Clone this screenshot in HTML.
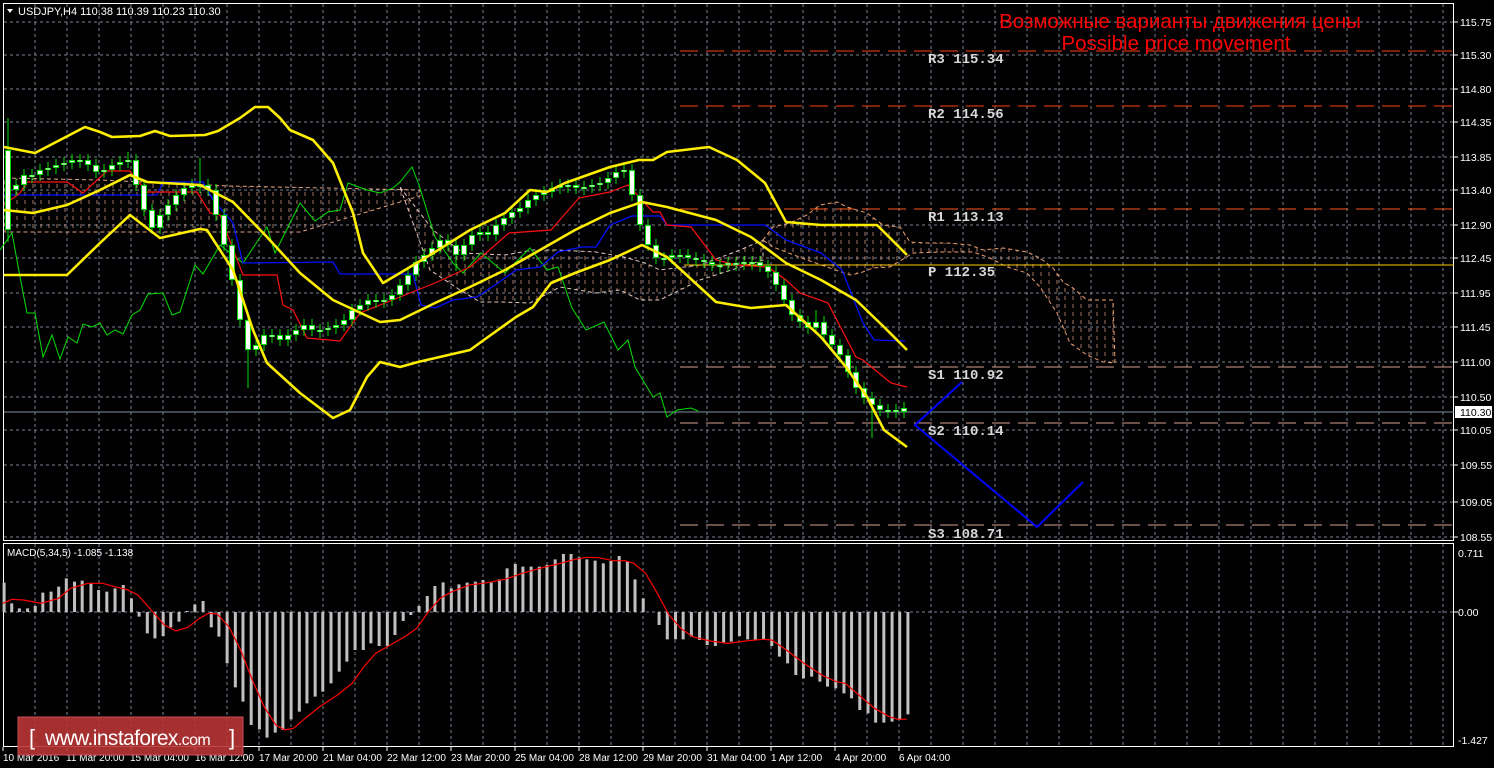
<!DOCTYPE html>
<html><head><meta charset="utf-8"><style>
html,body{margin:0;padding:0;background:#000;}
svg{display:block;font-family:"Liberation Sans",sans-serif;}
</style></head><body>
<svg width="1494" height="768" viewBox="0 0 1494 768" xmlns="http://www.w3.org/2000/svg">
<defs>
<pattern id="hatch" width="8" height="8" patternUnits="userSpaceOnUse">
<line x1="1" y1="0" x2="1" y2="4" stroke="#d8a088" stroke-width="1" stroke-opacity="0.75"/>
</pattern>
</defs>
<rect width="1494" height="768" fill="#000"/>
<!-- grid -->
<g stroke="#7a8595" stroke-width="1" stroke-dasharray="3,3" fill="none">
<path d="M35 4V541M67 4V541M99 4V541M131 4V541M163 4V541M195 4V541M227 4V541M259 4V541M291 4V541M323 4V541M355 4V541M387 4V541M419 4V541M451 4V541M483 4V541M515 4V541M547 4V541M579 4V541M611 4V541M643 4V541M675 4V541M707 4V541M739 4V541M771 4V541M803 4V541M835 4V541M867 4V541M899 4V541M931 4V541M963 4V541M995 4V541M1027 4V541M1059 4V541M1091 4V541M1123 4V541M1155 4V541M1187 4V541M1219 4V541M1251 4V541M1283 4V541M1315 4V541M1347 4V541M1379 4V541M1411 4V541M1443 4V541"/>
<path d="M35 544V746M67 544V746M99 544V746M131 544V746M163 544V746M195 544V746M227 544V746M259 544V746M291 544V746M323 544V746M355 544V746M387 544V746M419 544V746M451 544V746M483 544V746M515 544V746M547 544V746M579 544V746M611 544V746M643 544V746M675 544V746M707 544V746M739 544V746M771 544V746M803 544V746M835 544V746M867 544V746M899 544V746M931 544V746M963 544V746M995 544V746M1027 544V746M1059 544V746M1091 544V746M1123 544V746M1155 544V746M1187 544V746M1219 544V746M1251 544V746M1283 544V746M1315 544V746M1347 544V746M1379 544V746M1411 544V746M1443 544V746"/>
<path d="M4 22H1454M4 55H1454M4 89H1454M4 122H1454M4 157H1454M4 190H1454M4 225H1454M4 258H1454M4 293H1454M4 327H1454M4 362H1454M4 397H1454M4 430H1454M4 465H1454M4 502H1454M4 537H1454M4 612H1454"/>
</g>
<!-- frames -->
<g stroke="#fff" stroke-width="1" fill="none">
<rect x="3.5" y="3.5" width="1450" height="537"/>
<rect x="3.5" y="543.5" width="1450" height="203"/>
</g>
<!-- clouds -->
<g stroke-dasharray="4,3" stroke-width="1">
<polygon points="5,178 100,180 230,186 420,190 420,196 300,232 5,232" fill="url(#hatch)" stroke="#e0a080"/>
<polygon points="400,187 433,230 463,253 505,255 533,250 557,250 596,252 624,257 645,263 660,270 700,265 740,250 763,240 763,260 700,280 660,300 640,300 620,290 596,293 560,287 530,303 500,302 480,302 460,290 430,270" fill="url(#hatch)" stroke="#e8c8c0"/>
<polygon points="763,240 773,227 790,223 807,215 820,205 837,202 847,207 867,213 883,225 900,227 910,242 927,243 947,243 970,245 983,250 1003,248 1027,252 1040,258 1053,268 1063,282 1073,288 1087,300 1113,300 1115,363 1103,362 1087,355 1070,343 1057,313 1040,287 1027,273 1007,267 990,258 973,252 940,252 913,253 890,267 873,268 860,273 850,275 807,260 773,247" fill="url(#hatch)" stroke="#f0a070"/>
</g>
<!-- pivot lines -->
<g fill="none" stroke-width="1">
<path d="M680 51H1454M680 106H1454" stroke="#ff4010" stroke-dasharray="18,8"/>
<path d="M680 209H1454" stroke="#ff5520" stroke-dasharray="18,8"/>
<path d="M684 265H1454" stroke="#ffcc00"/>
<path d="M680 367H1454M680 423H1454M680 525H1454" stroke="#d8a090" stroke-dasharray="18,8"/>
<path d="M4 412H1454" stroke="#8090a0"/>
</g>
<g font-family="Liberation Mono,monospace" font-weight="bold" font-size="14" fill="#d8d8d8">
<text x="928" y="63">R3 115.34</text>
<text x="928" y="118">R2 114.56</text>
<text x="928" y="221">R1 113.13</text>
<text x="928" y="276">P  112.35</text>
<text x="928" y="379">S1 110.92</text>
<text x="928" y="435">S2 110.14</text>
<text x="928" y="538">S3 108.71</text>
</g>
<!-- chikou green -->
<polyline fill="none" stroke="#00e000" stroke-width="1" points="0,250 12,233 20,277 27,313 35,313 43,357 52,335 60,359 68,337 77,343 83,324 92,327 100,323 107,335 115,330 123,334 132,315 140,310 148,294 163,293 172,315 180,312 195,265 203,274 220,245 243,263 267,227 275,253 300,203 315,221 328,212 340,210 348,183 367,190 380,193 393,188 400,182 412,167 419,185 435,237 453,263 463,273 481,253 505,273 530,248 547,270 558,267 572,308 586,330 604,322 618,350 628,340 635,367 653,397 660,393 667,417 677,410 691,408 698,411"/>
<!-- kijun blue -->
<polyline fill="none" stroke="#0010ff" stroke-width="1.3" points="4,195 157,195 163,182 203,182 213,200 233,223 243,263 333,262 340,274 413,274 421,305 435,308 453,300 477,297 498,283 516,270 540,267 558,252 582,247 596,247 610,225 632,216 660,216 667,225 765,225 786,240 821,253 842,270 863,323 874,340 905,341"/>
<!-- tenkan red -->
<polyline fill="none" stroke="#ff1010" stroke-width="1.2" points="4,205 20,193 27,182 67,182 83,193 107,171 130,171 147,192 197,192 210,213 220,215 243,275 277,275 283,305 293,310 307,338 340,341 360,313 400,297 435,283 470,267 509,233 551,230 579,198 610,192 628,185 653,212 660,212 667,225 691,227 716,260 737,265 768,267 786,280 800,293 828,303 856,357 863,360 891,383 907,387"/>
<!-- candles -->
<path fill="none" stroke="#00dd00" stroke-width="1" d="M8 118V242M16 179V196M24 169V191M32 169V183M40 164V181M48 162V176M56 159V174M64 157V171M72 154V169M80 154V168M88 154V171M96 159V178M104 164V178M112 159V176M120 156V171M128 152V168M136 154V191M144 179V216M152 204V234M160 209V234M168 199V221M176 189V211M184 182V201M192 179V194M200 158V193M208 179V196M216 184V221M224 209V251M232 239V286M240 274V326M248 314V388M256 339V356M264 329V351M272 329V343M280 329V346M288 329V346M296 324V341M304 319V336M312 319V336M320 324V338M328 322V336M336 319V334M344 314V331M352 304V326M360 299V316M368 294V311M376 294V308M384 294V308M392 289V306M400 279V301M408 269V291M416 256V281M424 249V268M432 242V261M440 234V254M448 234V251M456 239V271M464 239V261M472 229V251M480 226V241M488 226V241M496 219V241M504 212V231M512 206V224M520 202V218M528 194V214M536 189V206M544 186V201M552 182V198M560 179V194M568 179V193M576 179V194M584 181V195M592 179V193M600 177V191M608 172V189M616 166V184M624 162V178M632 164V201M640 189V231M648 219V251M656 239V264M664 252V266M672 249V264M680 249V263M688 249V264M696 252V266M704 254V268M712 256V271M720 259V273M728 257V271M736 257V271M744 256V270M752 256V270M760 256V272M768 260V278M776 266V291M784 279V306M792 294V321M800 309V328M808 316V334M816 310V334M824 316V341M832 329V351M840 339V361M848 349V378M856 366V394M864 382V404M872 392V438M880 399V416M888 404V418M896 404V418M904 402V418"/>
<path fill="none" stroke="#00dd00" stroke-width="6" d="M8 150V230M16 185V190M24 175V185M32 175V177M40 170V175M48 168V170M56 165V168M64 163V165M72 160V163M80 160V162M88 160V165M96 165V172M104 170V172M112 165V170M120 162V165M128 160V162M136 160V185M144 185V210M152 210V228M160 215V228M168 205V215M176 195V205M184 188V195M192 185V188M200 185V187M208 185V190M216 190V215M224 215V245M232 245V280M240 280V320M248 320V350M256 345V350M264 335V345M272 335V337M280 335V340M288 335V340M296 330V335M304 325V330M312 325V330M320 330V332M328 328V330M336 325V328M344 320V325M352 310V320M360 305V310M368 300V305M376 300V302M384 300V302M392 295V300M400 285V295M408 275V285M416 262V275M424 255V262M432 248V255M440 240V248M448 240V245M456 245V255M464 245V255M472 235V245M480 232V235M488 232V235M496 225V235M504 218V225M512 212V218M520 208V212M528 200V208M536 195V200M544 192V195M552 188V192M560 185V188M568 185V187M576 185V188M584 187V189M592 185V187M600 183V185M608 178V183M616 172V178M624 170V172M632 170V195M640 195V225M648 225V245M656 245V258M664 258V260M672 255V258M680 255V257M688 255V258M696 258V260M704 260V262M712 262V265M720 265V267M728 263V265M736 263V265M744 262V264M752 262V264M760 262V266M768 266V272M776 272V285M784 285V300M792 300V315M800 315V322M808 322V328M816 322V328M824 322V335M832 335V345M840 345V355M848 355V372M856 372V388M864 388V398M872 398V405M880 405V410M888 410V412M896 410V412M904 408V412"/>
<path fill="none" stroke="#ffffff" stroke-width="4" d="M8 151V229M16 186V189M24 176V184M32 175.5V176.5M40 171V174M48 168.5V169.5M56 166V167M64 163.5V164.5M72 161V162M80 160.5V161.5M88 161V164M96 166V171M104 170.5V171.5M112 166V169M120 163V164M128 160.5V161.5M136 161V184M144 186V209M152 211V227M160 216V227M168 206V214M176 196V204M184 189V194M192 186V187M200 185.5V186.5M208 186V189M216 191V214M224 216V244M232 246V279M240 281V319M248 321V349M256 346V349M264 336V344M272 335.5V336.5M280 336V339M288 336V339M296 331V334M304 326V329M312 326V329M320 330.5V331.5M328 328.5V329.5M336 326V327M344 321V324M352 311V319M360 306V309M368 301V304M376 300.5V301.5M384 300.5V301.5M392 296V299M400 286V294M408 276V284M416 263V274M424 256V261M432 249V254M440 241V247M448 241V244M456 246V254M464 246V254M472 236V244M480 233V234M488 233V234M496 226V234M504 219V224M512 213V217M520 209V211M528 201V207M536 196V199M544 193V194M552 189V191M560 186V187M568 185.5V186.5M576 186V187M584 187.5V188.5M592 185.5V186.5M600 183.5V184.5M608 179V182M616 173V177M624 170.5V171.5M632 171V194M640 196V224M648 226V244M656 246V257M664 258.5V259.5M672 256V257M680 255.5V256.5M688 256V257M696 258.5V259.5M704 260.5V261.5M712 263V264M720 265.5V266.5M728 263.5V264.5M736 263.5V264.5M744 262.5V263.5M752 262.5V263.5M760 263V265M768 267V271M776 273V284M784 286V299M792 301V314M800 316V321M808 323V327M816 323V327M824 323V334M832 336V344M840 346V354M848 356V371M856 373V387M864 389V397M872 399V404M880 406V409M888 410.5V411.5M896 410.5V411.5M904 409V411"/>
<!-- bollinger -->
<g fill="none" stroke="#ffee00" stroke-width="2.6" stroke-linejoin="round">
<polyline points="4,147 35,153 60,140 85,127 100,132 112,137 140,136 155,131 170,136 205,135 218,131 240,118 255,107 268,107 280,118 290,130 313,140 333,163 353,213 363,253 383,283 400,273 435,252 470,230 505,213 530,190 547,192 565,183 610,167 639,160 653,160 667,152 709,147 737,160 765,183 786,222 821,225 877,225 907,255"/>
<polyline points="4,210 33,213 67,205 100,190 130,175 147,182 200,185 233,202 267,237 300,273 333,300 380,322 400,320 435,303 470,287 505,270 540,250 575,230 610,213 642,202 667,207 716,220 751,237 786,263 821,280 856,300 884,327 907,350"/>
<polyline points="4,275 67,275 100,243 130,215 160,238 200,229 207,230 233,270 253,330 267,363 300,393 333,418 350,410 367,377 380,362 400,367 418,362 470,350 488,337 516,317 533,307 551,283 575,273 610,260 642,245 667,257 716,302 751,308 786,305 821,337 846,367 867,397 884,430 907,447"/>
</g>
<!-- projection -->
<polyline fill="none" stroke="#0000ff" stroke-width="2" points="962,382 915,425 1037,527 1083,482"/>
<!-- MACD histogram -->
<g transform="translate(0,540) scale(0.58689,0.33333)">
<path fill="none" stroke="#c0c0c0" stroke-width="3" vector-effect="non-scaling-stroke" d="M7 216V128M20 216V190M33 216V205M47 216V205M60 216V198M73 216V158M87 216V155M100 216V140M113 216V115M127 216V125M140 216V122M155 216V130M168 216V150M182 216V155M196 216V145M210 216V135M224 216V175M237 216V230M251 216V280M264 216V295M278 216V288M291 216V262M305 216V245M319 216V213M332 216V193M346 216V183M360 216V262M373 216V290M387 216V370M401 216V442M414 216V485M428 216V555M442 216V568M455 216V593M469 216V578M482 216V570M496 216V538M510 216V515M523 216V490M537 216V470M550 216V455M564 216V430M578 216V395M591 216V365M605 216V330M619 216V330M632 216V310M646 216V318M660 216V318M673 216V285M687 216V243M700 216V225M714 216V198M728 216V168M741 216V138M755 216V127M769 216V145M782 216V133M796 216V128M810 216V125M823 216V120M837 216V128M851 216V118M864 216V85M878 216V72M891 216V80M905 216V80M919 216V80M932 216V75M946 216V58M960 216V42M973 216V42M987 216V52M1000 216V58M1014 216V62M1028 216V70M1041 216V63M1055 216V48M1069 216V65M1082 216V118M1096 216V175M1123 216V255M1137 216V298M1151 216V298M1164 216V298M1178 216V290M1192 216V300M1205 216V315M1219 216V318M1233 216V310M1246 216V305M1260 216V288M1274 216V298M1287 216V300M1301 216V300M1315 216V318M1328 216V350M1342 216V370M1356 216V405M1369 216V415M1383 216V410M1397 216V425M1410 216V440M1424 216V445M1438 216V460M1451 216V475M1465 216V510M1479 216V520M1492 216V548M1506 216V548M1520 216V545M1533 216V540M1547 216V523"/>
<polyline fill="none" stroke="#ff0000" stroke-width="1.2" vector-effect="non-scaling-stroke" points="5,190 20,178 40,180 70,190 100,175 120,145 150,130 175,130 195,140 215,148 235,165 260,215 280,255 300,273 320,262 340,235 355,220 370,222 390,260 410,330 430,420 450,500 470,555 485,570 500,565 520,535 545,500 575,465 600,430 620,380 640,340 665,315 690,290 710,265 730,215 750,175 770,155 800,135 830,128 860,118 890,100 920,85 950,72 980,58 1000,52 1020,53 1045,62 1065,62 1080,70 1100,100 1120,160 1140,225 1160,265 1180,290 1210,303 1240,310 1270,303 1300,298 1315,300 1340,330 1370,370 1400,405 1425,425 1440,430 1460,460 1490,505 1515,530 1530,538 1545,538"/>
</g>
<!-- header -->
<polygon points="7,9 13,9 10,13" fill="#fff"/>
<text x="18" y="15" font-size="11" fill="#fff">USDJPY,H4  110.38 110.39 110.23 110.30</text>
<text x="7" y="556" font-size="10" fill="#fff">MACD(5,34,5) -1.085 -1.138</text>
<text x="1180" y="28" font-size="20.5" fill="#ff0000" text-anchor="middle">Возможные варианты движения цены</text>
<text x="1176" y="50" font-size="20.5" fill="#ff0000" text-anchor="middle">Possible price movement</text>
<!-- price axis -->
<g font-size="10.5" fill="#fff">
<text x="1460" y="26">115.75</text><text x="1460" y="59">115.30</text><text x="1460" y="93">114.80</text><text x="1460" y="126">114.35</text><text x="1460" y="161">113.85</text><text x="1460" y="194">113.40</text><text x="1460" y="229">112.90</text><text x="1460" y="262">112.45</text><text x="1460" y="297">111.95</text><text x="1460" y="331">111.45</text><text x="1460" y="366">111.00</text><text x="1460" y="401">110.50</text><text x="1460" y="434">110.05</text><text x="1460" y="469">109.55</text><text x="1460" y="506">109.05</text><text x="1460" y="541">108.55</text>
<text x="1458" y="557">0.711</text><text x="1458" y="616">0.00</text><text x="1458" y="744">-1.427</text>
</g>
<rect x="1455" y="406" width="37" height="12" fill="#fff"/>
<text x="1460" y="416" font-size="10.5" fill="#000">110.30</text>
<g stroke="#fff"><path d="M1454 22h4M1454 55h4M1454 89h4M1454 122h4M1454 157h4M1454 190h4M1454 225h4M1454 258h4M1454 293h4M1454 327h4M1454 362h4M1454 397h4M1454 430h4M1454 465h4M1454 502h4M1454 537h4M1454 612h4"/></g>
<!-- time axis -->
<g font-size="10" fill="#fff">
<text x="3" y="761">10 Mar 2016</text><text x="66" y="761">11 Mar 20:00</text><text x="130" y="761">15 Mar 04:00</text><text x="195" y="761">16 Mar 12:00</text><text x="259" y="761">17 Mar 20:00</text><text x="323" y="761">21 Mar 04:00</text><text x="387" y="761">22 Mar 12:00</text><text x="451" y="761">23 Mar 20:00</text><text x="515" y="761">25 Mar 04:00</text><text x="579" y="761">28 Mar 12:00</text><text x="643" y="761">29 Mar 20:00</text><text x="707" y="761">31 Mar 04:00</text><text x="771" y="761">1 Apr 12:00</text><text x="835" y="761">4 Apr 20:00</text><text x="899" y="761">6 Apr 04:00</text>
</g>
<g stroke="#fff"><path d="M3 747v4M67 747v4M131 747v4M195 747v4M259 747v4M323 747v4M387 747v4M451 747v4M515 747v4M579 747v4M643 747v4M707 747v4M771 747v4M835 747v4M899 747v4"/></g>
<!-- logo -->
<rect x="18" y="717" width="225" height="38" fill="#b83535" fill-opacity="0.9" stroke="#c85050"/>
<text x="29" y="745" font-size="22" fill="#fff">[</text>
<text x="45" y="745" font-size="21" fill="#fff" letter-spacing="-0.6">www.instaforex<tspan font-size="16">.com</tspan></text>
<text x="229" y="745" font-size="22" fill="#fff">]</text>
</svg>
</body></html>
